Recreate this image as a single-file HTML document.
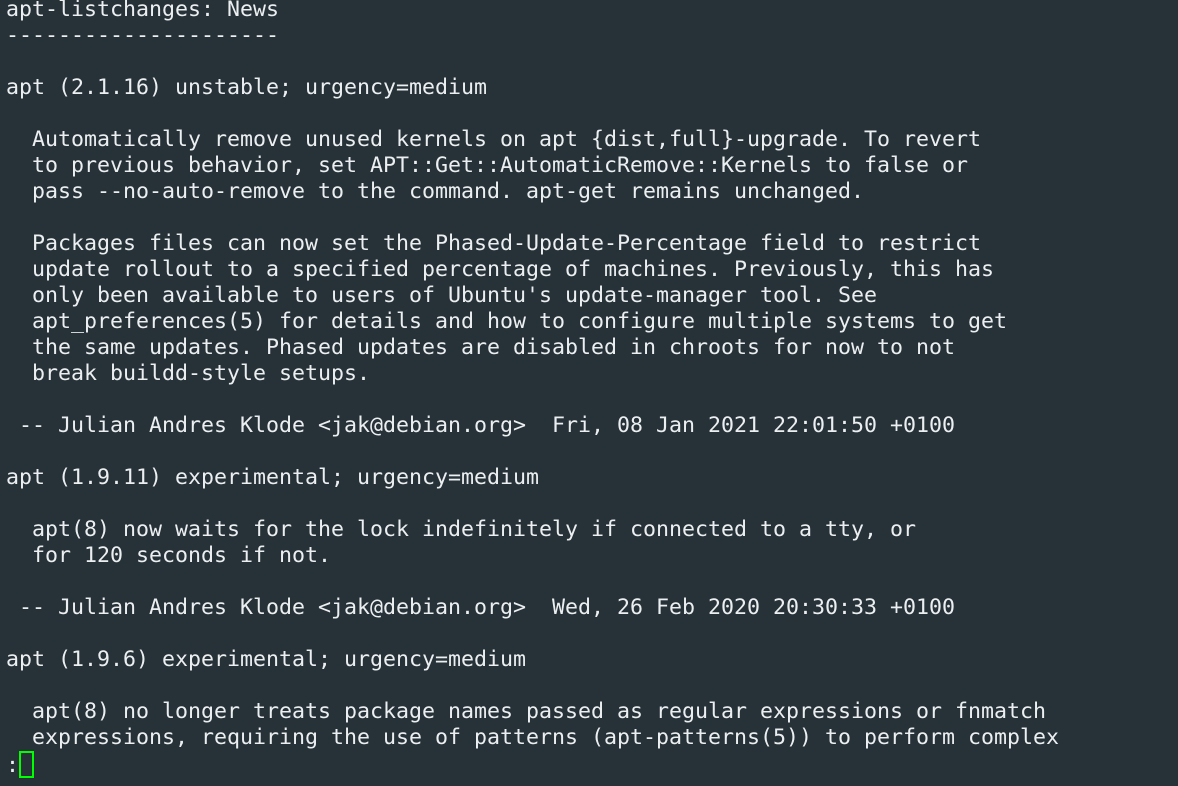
<!DOCTYPE html>
<html><head><meta charset="utf-8"><style>
html,body{margin:0;padding:0;background:#263238;width:1178px;height:786px;overflow:hidden}
pre{margin:0;position:absolute;left:6px;top:-3px;font-family:"DejaVu Sans Mono","Liberation Mono",monospace;font-size:21.6px;line-height:26px;color:#eceff1}
.cur{display:inline-block;width:11px;height:23px;border:2px solid #00ff00;vertical-align:-6px;margin-left:0px}
</style></head><body><pre>apt-listchanges: News
---------------------

apt (2.1.16) unstable; urgency=medium

  Automatically remove unused kernels on apt {dist,full}-upgrade. To revert
  to previous behavior, set APT::Get::AutomaticRemove::Kernels to false or
  pass --no-auto-remove to the command. apt-get remains unchanged.

  Packages files can now set the Phased-Update-Percentage field to restrict
  update rollout to a specified percentage of machines. Previously, this has
  only been available to users of Ubuntu's update-manager tool. See
  apt_preferences(5) for details and how to configure multiple systems to get
  the same updates. Phased updates are disabled in chroots for now to not
  break buildd-style setups.

 -- Julian Andres Klode &lt;jak@debian.org&gt;  Fri, 08 Jan 2021 22:01:50 +0100

apt (1.9.11) experimental; urgency=medium

  apt(8) now waits for the lock indefinitely if connected to a tty, or
  for 120 seconds if not.

 -- Julian Andres Klode &lt;jak@debian.org&gt;  Wed, 26 Feb 2020 20:30:33 +0100

apt (1.9.6) experimental; urgency=medium

  apt(8) no longer treats package names passed as regular expressions or fnmatch
  expressions, requiring the use of patterns (apt-patterns(5)) to perform complex
:<span class="cur"></span></pre></body></html>
